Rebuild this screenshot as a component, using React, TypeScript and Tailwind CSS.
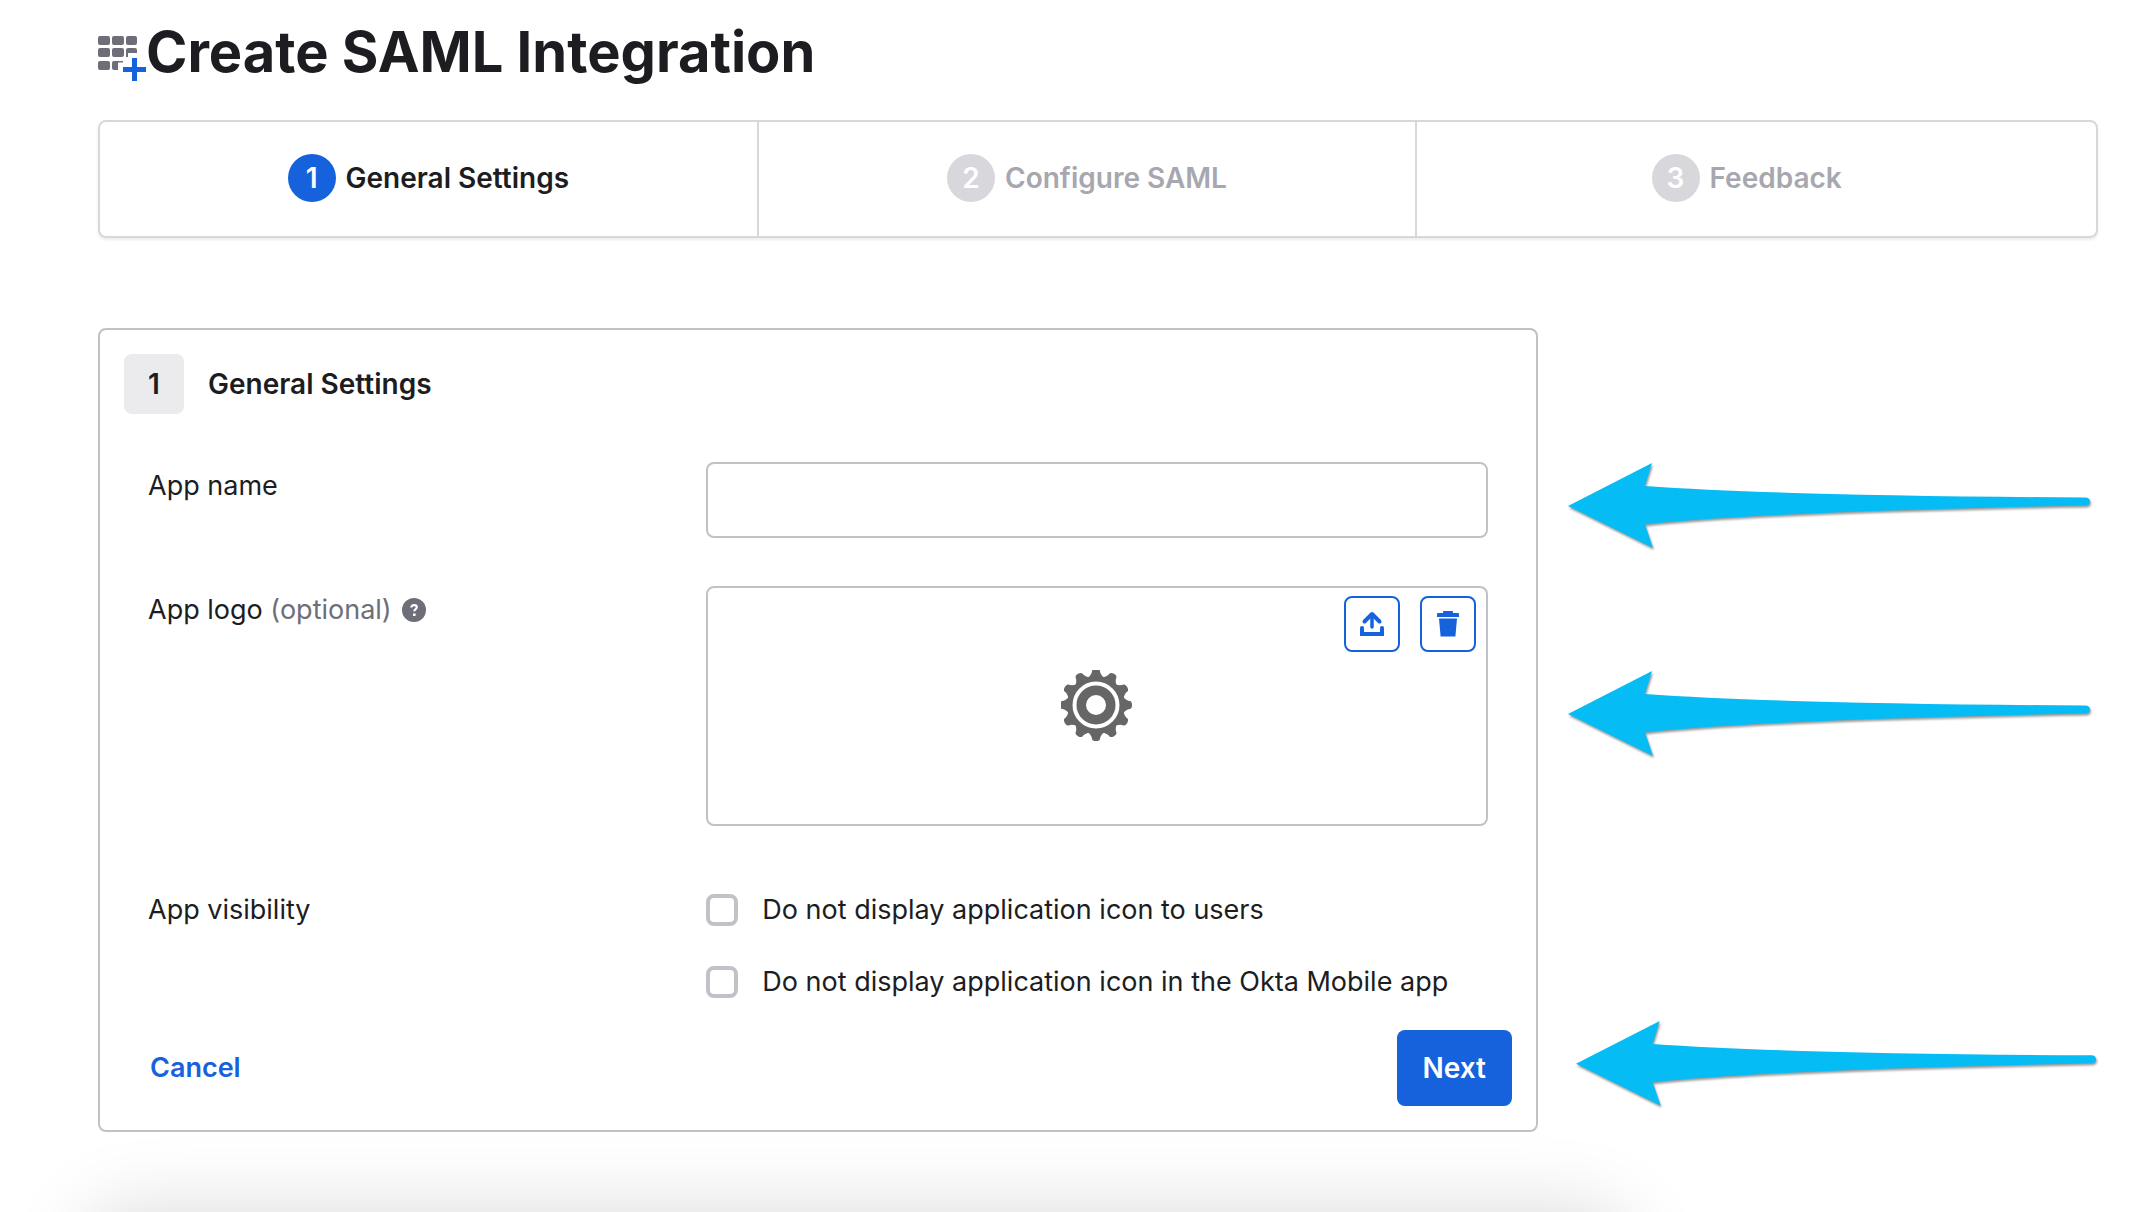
import React from "react";

const steps = [
  { id: 1, label: "General Settings", active: true },
  { id: 2, label: "Configure SAML", active: false },
  { id: 3, label: "Feedback", active: false },
];

const visibilityOptions = [
  { id: "hide-users", label: "Do not display application icon to users" },
  {
    id: "hide-mobile",
    label: "Do not display application icon in the Okta Mobile app",
  },
];

function AppsIcon() {
  return (
    <svg viewBox="0 0 48 46" className="h-[46px] w-12" aria-hidden="true">
      <g fill="#6e6e78">
        <rect x="0" y="0" width="12" height="9" rx="2" />
        <rect x="14" y="0" width="12" height="9" rx="2" />
        <rect x="28" y="0" width="11" height="9" rx="2" />
        <rect x="0" y="12" width="12" height="9" rx="2" />
        <rect x="14" y="12" width="12" height="9" rx="2" />
        <path d="M30 12h7q2 0 2 2v3H30v4h-2v-7q0-2 2-2z" />
        <rect x="0" y="25" width="12" height="9" rx="2" />
        <path d="M16 25h9v1.500H20V34h-4q-2 0-2-2v-5q0-2 2-2z" />
      </g>
      <path d="M34 22h5v9h9v5h-9v9h-5v-9h-9v-5h9z" fill="#1662dd" />
    </svg>
  );
}

function HelpIcon() {
  return (
    <svg viewBox="0 0 24 24" className="size-6" aria-hidden="true">
      <circle cx="12" cy="12" r="12" fill="#6e6e78" />
      <path
        d="M9.300 9.600c0-1.500 1.200-2.500 2.800-2.500s2.700 .9 2.700 2.200c0 1.800-2.500 1.900-2.500 4"
        fill="none"
        stroke="#fff"
        strokeWidth="2.200"
      />
      <rect x="11" y="15.500" width="2.600" height="2.500" fill="#fff" />
    </svg>
  );
}

function UploadIcon() {
  return (
    <svg
      viewBox="0 0 24 26"
      className="h-[26px] w-6"
      fill="none"
      stroke="#1662dd"
      strokeWidth="4"
      strokeLinecap="round"
      aria-hidden="true"
    >
      <path d="M12 4v12" strokeWidth="3.500" />
      <path d="M4.500 10.500L12 3l7.500 7.500" strokeLinejoin="round" />
      <path d="M2 17v6h20v-6" />
    </svg>
  );
}

function TrashIcon() {
  return (
    <svg
      viewBox="0 0 22 26"
      className="h-[26px] w-[22px]"
      fill="#1662dd"
      aria-hidden="true"
    >
      <path d="M6 1q0-1 1-1h8q1 0 1 1v1h5q1 0 1 1v3H0V3q0-1 1-1h5z" />
      <path d="M2 7.500h18L18.400 25.500H3.600z" />
    </svg>
  );
}

function GearIcon() {
  const teeth = Array.from({ length: 12 }, (_, i) => i * 30);
  return (
    <svg viewBox="-35 -35 72 72" className="size-[72px]" aria-hidden="true">
      <g fill="#666">
        {teeth.map((angle) => (
          <path
            key={angle}
            d="M-8-27Q-4-31-4-34Q-3.500-36 0-36Q3.500-36 4-34Q4-31 8-27z"
            transform={`rotate(${angle})`}
          />
        ))}
        <circle r="29" />
      </g>
      <circle r="21.500" fill="none" stroke="#fff" strokeWidth="4" />
      <circle r="10" fill="#fff" />
    </svg>
  );
}

function Arrow() {
  return (
    <svg
      viewBox="0 0 524 90"
      className="h-[90px] w-full drop-shadow-[1px_2px_1px_rgba(0,0,0,0.4)]"
      preserveAspectRatio="xMinYMin meet"
      aria-hidden="true"
    >
      <path
        d="M0 44L84 1L77 24Q220 34 518 35.500Q522 36 522 39.500Q522 43 518 43.500Q190 50 77 62.500L85 86z"
        fill="#05bcf5"
      />
    </svg>
  );
}

function Stepper() {
  return (
    <ol className="flex rounded-lg border-2 border-[#d7d7dc] shadow-[0_2px_3px_rgba(0,0,0,0.08)]">
      {steps.map((step) => (
        <li
          key={step.id}
          className="flex h-[114px] w-[33%] items-center justify-center gap-[10px] border-r-2 border-[#d7d7dc] pb-0.5 last:w-[34%] last:border-r-0 last:pr-5"
        >
          <span
            className={
              step.active
                ? "flex size-12 items-center justify-center rounded-full bg-[#1662dd] text-[28px] font-semibold text-white"
                : "flex size-12 items-center justify-center rounded-full bg-[#d7d7dc] text-[28px] font-semibold text-white"
            }
          >
            {step.id}
          </span>
          <span
            className={
              step.active
                ? "text-[28px] font-semibold"
                : "text-[28px] font-semibold text-[#a7a7b0]"
            }
          >
            {step.label}
          </span>
        </li>
      ))}
    </ol>
  );
}

function SettingsForm() {
  return (
    <form className="w-[72%] rounded-lg border-2 border-[#c1c1c8] pt-6 pb-6">
      <div className="flex items-center gap-6 pl-6">
        <span className="flex size-[60px] items-center justify-center rounded-lg bg-[#ebebed] text-[28px] font-semibold">
          1
        </span>
        <h2 className="text-[28px] font-semibold">General Settings</h2>
      </div>

      <div className="mt-12 grid grid-cols-[5fr_7fr] px-12">
        <label htmlFor="app-name" className="pt-1">
          App name
        </label>
        <input
          id="app-name"
          type="text"
          className="h-[76px] w-full rounded-lg border-2 border-[#c1c1c8] px-4"
        />
      </div>

      <div className="mt-12 grid grid-cols-[5fr_7fr] px-12">
        <div className="flex items-center gap-[10px] self-start pt-1">
          <span>
            App logo <span className="text-[#6e6e78]">(optional)</span>
          </span>
          <HelpIcon />
        </div>
        <div className="relative flex h-60 items-center justify-center rounded-lg border-2 border-[#c1c1c8]">
          <GearIcon />
          <div className="absolute top-2 right-[10px] flex gap-5">
            <button
              type="button"
              aria-label="Upload logo"
              className="flex size-14 items-center justify-center rounded-lg border-2 border-[#1662dd]"
            >
              <UploadIcon />
            </button>
            <button
              type="button"
              aria-label="Delete logo"
              className="flex size-14 items-center justify-center rounded-lg border-2 border-[#1662dd]"
            >
              <TrashIcon />
            </button>
          </div>
        </div>
      </div>

      <div className="mt-16 grid grid-cols-[5fr_7fr] px-12">
        <div>App visibility</div>
        <div className="flex flex-col gap-8">
          {visibilityOptions.map((option) => (
            <div key={option.id} className="flex items-center gap-6">
              <input
                id={option.id}
                type="checkbox"
                className="size-8 shrink-0 appearance-none rounded-lg border-4 border-[#c1c1c8]"
              />
              <label htmlFor={option.id}>{option.label}</label>
            </div>
          ))}
        </div>
      </div>

      <div className="mt-7 flex items-center justify-between pr-6 pl-[50px]">
        <a href="#" className="font-semibold text-[#1662dd]">
          Cancel
        </a>
        <button
          type="submit"
          className="h-[76px] rounded-lg bg-[#1662dd] px-[26px] text-[28px] font-semibold text-white"
        >
          Next
        </button>
      </div>
    </form>
  );
}

export default function App() {
  return (
    <div className="bg-white font-['Inter',sans-serif] text-[27px] leading-10 text-[#1d1d21]">
      <div className="pr-[42px] pl-[98px]">
        <header className="flex h-[120px] items-start pt-5">
          <div className="pt-4">
            <AppsIcon />
          </div>
          <h1 className="text-[56px] leading-16 font-bold">
            Create SAML Integration
          </h1>
        </header>
        <Stepper />
        <main className="mt-[90px] flex">
          <SettingsForm />
          <aside className="flex flex-1 flex-col pt-[134px] pl-[30px]">
            <Arrow />
            <div className="mt-[118px]">
              <Arrow />
            </div>
            <div className="mt-[260px] pl-2">
              <Arrow />
            </div>
          </aside>
        </main>
      </div>
      {/* shadow of the docked panel below the fold */}
      <div className="h-20 overflow-hidden pt-20">
        <div className="mr-[24%] ml-[4%] h-40 rounded-[40px] shadow-[0_0_80px_rgba(0,0,0,0.15)]" />
      </div>
    </div>
  );
}
